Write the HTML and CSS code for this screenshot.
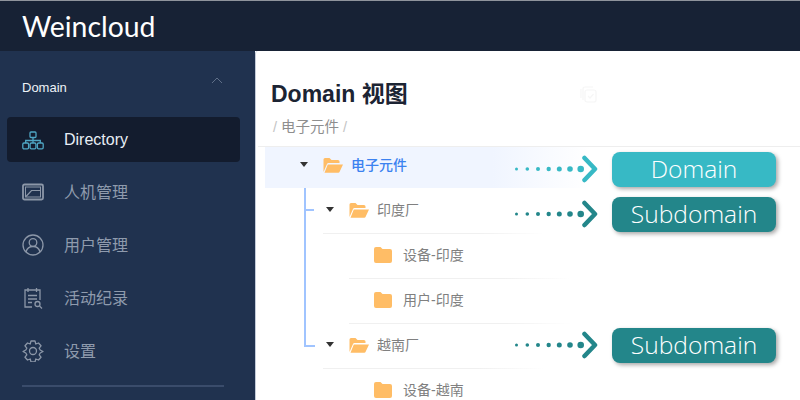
FILE: index.html
```html
<!DOCTYPE html>
<html lang="zh">
<head>
<meta charset="utf-8">
<title>Weincloud</title>
<link rel="stylesheet" href="styles.css">
</head>
<body>
<div class="app">
  <header class="topbar"><span class="logo">Weincloud</span></header>
  <div class="body">
    <aside class="sidebar">
      <div class="side-head">
        <span>Domain</span>
        <svg class="chev" width="12" height="7" viewBox="0 0 12 7"><path d="M1 6l5-5 5 5" fill="none" stroke="#5f6f88" stroke-width="1"/></svg>
      </div>
      <nav class="nav">
        <a class="nav-item active">
          <svg class="ico" width="22" height="22" viewBox="0 0 22 22" fill="none" stroke="#4fa6c4" stroke-width="1.300"><rect x="8" y="3" width="6" height="5.500" rx="1"/><path d="M11 8.500v5.500M3.700 14v-2.500h14.600V14"/><rect x=".8" y="14" width="5.800" height="5.800" rx="1.200"/><rect x="8.100" y="14" width="5.800" height="5.800" rx="1.200"/><rect x="15.400" y="14" width="5.800" height="5.800" rx="1.200"/></svg>
          <span>Directory</span>
        </a>
        <a class="nav-item">
          <svg class="ico" width="22" height="22" viewBox="0 0 22 22" fill="none" stroke="#8c97a8"><rect x="1" y="3.500" width="20" height="15" rx="1.500" stroke-width="1.800"/><rect x="3.500" y="6" width="15" height="10" stroke-width="1"/><path d="M4 15.500l5.500-6H18" stroke-width="1.200"/></svg>
          <span>人机管理</span>
        </a>
        <a class="nav-item">
          <svg class="ico" width="22" height="22" viewBox="1 1 22 22" fill="none" stroke="#8c97a8" stroke-width="1.300"><circle cx="12" cy="12" r="10"/><circle cx="12" cy="9.500" r="3.800"/><path d="M5 19c1-3.800 4-5.500 7-5.500s6 1.700 7 5.500"/></svg>
          <span>用户管理</span>
        </a>
        <a class="nav-item">
          <svg class="ico" width="22" height="22" viewBox="1 1 22 22" fill="none" stroke="#8c97a8" stroke-width="1.300"><path d="M11 21H4V4h15v10M7 2v4M15.500 2v4M7 9.500h9M7 13h9M7 16.500h4"/><circle cx="16.500" cy="18" r="2.500"/><path d="M18.500 20l2.500 2.500"/></svg>
          <span>活动纪录</span>
        </a>
        <a class="nav-item">
          <svg class="ico" width="22" height="22" viewBox="1 1 22 22" fill="none" stroke="#8c97a8" stroke-width="1.300"><path d="M10 2h4l.8 3 2.700-1 2.500 2.800-1.800 2.400 1 1.800 2.800 1.500-2.800 1.500-1 1.800 1.800 2.400-2.500 2.800-2.700-1-.8 3h-4l-.8-3-2.700 1L4 18.200l1.800-2.400-1-1.800-2.800-1.500 2.800-1.500 1-1.800L4 6.800 6.500 4l2.700 1z" stroke-linejoin="round"/><circle cx="12" cy="12" r="3.500"/></svg>
          <span>设置</span>
        </a>
      </nav>
      <div class="divider"></div>
    </aside>
    <main class="main">
      <div class="title-row">
        <h1 class="title">Domain 视图</h1>
        <svg class="ghost" width="17" height="17" viewBox="0 0 17 17" fill="none" stroke="#f6f6f6" stroke-width="1.200"><path d="M3 14V3q0-2 2-2h8M1 12V3"/><rect x="5" y="4" width="11" height="12" rx="2"/><path d="M8 10l2 2 3.500-4"/></svg>
      </div>
      <div class="crumb"><i>/</i> 电子元件 <i>/</i></div>
      <div class="tree">
        <div class="row selected">
          <span class="caret"></span>
          <svg class="open" width="22" height="16" viewBox="0 0 22 16"><path d="M1.500 15V2.500Q1.500 1 3 1h4.500l2 2H16q1.500 0 1.500 1.500V6H6.500q-1 0-1.500 1L1.500 15z" fill="#ffbd66"/><path d="M5.800 7.500h15.200l-3.500 7.500q-.3.800-1.200.8H2.500z" fill="#ffbd66"/></svg>
          <span class="label">电子元件</span>
        </div>
        <div class="row lv1 sep">
          <span class="caret"></span>
          <svg class="open" width="22" height="16" viewBox="0 0 22 16"><path d="M1.500 15V2.500Q1.500 1 3 1h4.500l2 2H16q1.500 0 1.500 1.500V6H6.500q-1 0-1.500 1L1.500 15z" fill="#ffbd66"/><path d="M5.800 7.500h15.200l-3.500 7.500q-.3.800-1.200.8H2.500z" fill="#ffbd66"/></svg>
          <span class="label">印度厂</span>
        </div>
        <div class="row lv2 sep">
          <svg class="closed" width="18" height="16" viewBox="0 0 18 16"><path d="M0 2Q0 0 2 0h4.500l2 2H16q2 0 2 2v10q0 2-2 2H2q-2 0-2-2z" fill="#ffbd66"/></svg>
          <span class="label">设备-印度</span>
        </div>
        <div class="row lv2 sep">
          <svg class="closed" width="18" height="16" viewBox="0 0 18 16"><path d="M0 2Q0 0 2 0h4.500l2 2H16q2 0 2 2v10q0 2-2 2H2q-2 0-2-2z" fill="#ffbd66"/></svg>
          <span class="label">用户-印度</span>
        </div>
        <div class="row lv1 sep">
          <span class="caret"></span>
          <svg class="open" width="22" height="16" viewBox="0 0 22 16"><path d="M1.500 15V2.500Q1.500 1 3 1h4.500l2 2H16q1.500 0 1.500 1.500V6H6.500q-1 0-1.500 1L1.500 15z" fill="#ffbd66"/><path d="M5.800 7.500h15.200l-3.500 7.500q-.3.800-1.200.8H2.500z" fill="#ffbd66"/></svg>
          <span class="label">越南厂</span>
        </div>
        <div class="row lv2">
          <svg class="closed" width="18" height="16" viewBox="0 0 18 16"><path d="M0 2Q0 0 2 0h4.500l2 2H16q2 0 2 2v10q0 2-2 2H2q-2 0-2-2z" fill="#ffbd66"/></svg>
          <span class="label">设备-越南</span>
        </div>
        <svg class="connector" width="12" height="160" viewBox="0 0 12 160"><path d="M1 0v158h10M1 22h9" fill="none" stroke="#a0c4ff" stroke-width="2"/></svg>
      </div>
    </main>
  </div>
  <div class="note note-a">
    <svg class="arrow" width="84" height="28" viewBox="0 0 84 28"><g fill="#37b9c5"><circle cx="1.500" cy="14" r="1.500"/><circle cx="12.300" cy="14" r="1.800"/><circle cx="23" cy="14" r="2"/><circle cx="33.700" cy="14" r="2.200"/><circle cx="44.300" cy="14" r="2.500"/><circle cx="55" cy="14" r="2.800"/><circle cx="65.700" cy="14" r="3.300"/></g><path d="M69.500 3l10.500 11-10.500 11" fill="none" stroke="#37b9c5" stroke-width="4.500" stroke-linecap="round" stroke-linejoin="round"/></svg>
    <span class="tag light">Domain</span>
  </div>
  <div class="note note-b">
    <svg class="arrow" width="84" height="28" viewBox="0 0 84 28"><g fill="#23868a"><circle cx="1.500" cy="14" r="1.500"/><circle cx="12.300" cy="14" r="1.800"/><circle cx="23" cy="14" r="2"/><circle cx="33.700" cy="14" r="2.200"/><circle cx="44.300" cy="14" r="2.500"/><circle cx="55" cy="14" r="2.800"/><circle cx="65.700" cy="14" r="3.300"/></g><path d="M69.500 3l10.500 11-10.500 11" fill="none" stroke="#23868a" stroke-width="4.500" stroke-linecap="round" stroke-linejoin="round"/></svg>
    <span class="tag dark">Subdomain</span>
  </div>
  <div class="note note-c">
    <svg class="arrow" width="84" height="28" viewBox="0 0 84 28"><g fill="#23868a"><circle cx="1.500" cy="14" r="1.500"/><circle cx="12.300" cy="14" r="1.800"/><circle cx="23" cy="14" r="2"/><circle cx="33.700" cy="14" r="2.200"/><circle cx="44.300" cy="14" r="2.500"/><circle cx="55" cy="14" r="2.800"/><circle cx="65.700" cy="14" r="3.300"/></g><path d="M69.500 3l10.500 11-10.500 11" fill="none" stroke="#23868a" stroke-width="4.500" stroke-linecap="round" stroke-linejoin="round"/></svg>
    <span class="tag dark">Subdomain</span>
  </div>
</div>
</body>
</html>
```
FILE: styles.css
```css
* { box-sizing: border-box; }
html, body { margin: 0; height: 100%; overflow: hidden; }
body { font-family: "Liberation Sans", "Noto Sans CJK SC", sans-serif; background: #fff; }
.app { position: relative; width: 800px; height: 400px; overflow: hidden; display: flex; flex-direction: column; }

.topbar { flex: 0 0 51px; background: #172235; display: flex; align-items: center; padding-left: 22px; border-top: 1px solid #8f949c; }
.logo { font-family: Lato, sans-serif; font-size: 28.400px; font-weight: 400; color: #fff; }

.body { flex: 1; display: flex; min-height: 0; }
.sidebar { flex: 0 0 255px; background: #20324f; padding: 0 7px; display: flex; flex-direction: column; }
.side-head { height: 66px; display: flex; justify-content: space-between; padding: 29px 25px 0 15px; color: #eef2f7; font-size: 13px; line-height: 16px; }
.chev { margin-top: -3px; }
.nav { display: flex; flex-direction: column; gap: 7.750px; }
.nav-item { width: 233px; height: 45px; display: flex; align-items: center; gap: 20px; padding-left: 15px; color: #8f9bad; font-size: 16px; border-radius: 4px; }
.nav-item:not(.active) span { margin-bottom: 2px; }
.nav-item.active { background: #131c2e; color: #e8eef5; }
.ico { flex: none; }
.divider { height: 2px; margin: 12px 24px 0 15px; background: #3a4c6b; }

.main { flex: 1; background: #fff; padding: 28px 0 0 2px; border-left: 1px solid #c3cbd9; border-top-left-radius: 3px; min-width: 0; }
.title-row { display: flex; align-items: center; margin-left: 13px; }
.title { margin: 0; font-size: 23px; line-height: 30px; font-weight: 700; color: #1c2433; }
.ghost { margin-left: 172px; }
.crumb { margin: 8px 0 0 15px; font-size: 14.500px; line-height: 20px; color: #8e8e8e; height: 29px; }
.crumb i { font-style: normal; color: #c4c4c4; }

.tree { position: relative; border-top: 1px solid #eee; }
.row { position: relative; height: 45px; display: flex; align-items: center; font-size: 14px; color: #808080; }
.label { margin-bottom: 2px; }
.row.selected { margin: 0 0 -1px 7px; height: 41px; padding: 0 0 6px 35px; background: linear-gradient(90deg, #f0f5ff 0%, #f0f5ff 70%, #fff 100%); width: 325px; }
.row.selected .label { color: #3c82f0; font-weight: 500; }
.row.lv1 { margin-left: 65px; }
.row.lv2 { margin-left: 91px; padding-left: 25px; }
.row.sep::after { content: ""; position: absolute; left: 0; bottom: -2px; width: 222px; height: 1px; background: linear-gradient(90deg, #f0f0f0 70%, #fff); }
.caret { width: 0; height: 0; border-left: 4px solid transparent; border-right: 4px solid transparent; border-top: 5px solid #333; margin-right: 14px; margin-left: 3px; }
.selected .caret { margin-left: 0; }
.open { margin-right: 7px; }
.closed { margin-right: 11px; }
.connector { position: absolute; left: 46px; top: 41px; }

.note { position: absolute; left: 515px; display: flex; align-items: center; gap: 13px; }
.note-a { top: 152px; }
.note-b { top: 197px; }
.note-c { top: 328px; }
.arrow { flex: none; margin-top: -1px; }
.tag { width: 164px; height: 35px; padding-bottom: 2px; border-radius: 8px; display: flex; align-items: center; justify-content: center; color: #fff; font-family: "Open Sans", sans-serif; font-size: 24.600px; font-weight: 350; box-shadow: 2px 2px 4px rgba(0,0,0,.35); }
.tag.light { background: #37b9c5; }
.tag.dark { background: #23868a; }
```
